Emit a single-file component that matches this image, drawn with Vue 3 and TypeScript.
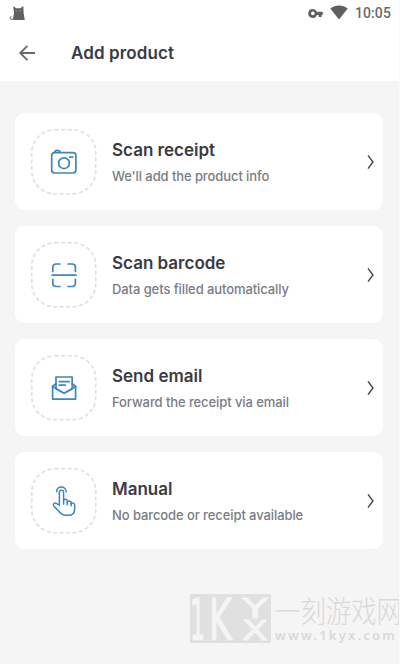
<script setup lang="ts">
type IconName = 'camera' | 'barcode' | 'mail' | 'tap'

interface Option {
  icon: IconName
  title: string
  description: string
}

const options: Option[] = [
  { icon: 'camera', title: 'Scan receipt', description: "We'll add the product info" },
  { icon: 'barcode', title: 'Scan barcode', description: 'Data gets filled automatically' },
  { icon: 'mail', title: 'Send email', description: 'Forward the receipt via email' },
  { icon: 'tap', title: 'Manual', description: 'No barcode or receipt available' },
]
</script>

<template>
  <div class="screen">
    <header class="top">
      <div class="status">
        <svg class="cat" width="18" height="16" viewBox="0 0 18 16">
          <path d="M3.6 15 5 8.5 4.2 1l3 2.3h4.2L14.4 1l.2 7 1.2 7Z" fill="#606060" />
          <path d="M5 14.3H2.6C.6 14.3.8 12 2.3 11.6" fill="none" stroke="#858585" stroke-width="1.2" />
          <path d="M6.5 5.8h1.6M10.5 5.8h1.6" stroke="#aaa" stroke-width=".8" />
        </svg>
        <div class="indicators">
          <svg class="key" width="16" height="9" viewBox="0 0 17 10">
            <path fill="#5f5f5f" fill-rule="evenodd" d="M5 0a5 5 0 0 1 4.6 3H16v3.7h-1.3V9h-3.3V6.7H9.6A5 5 0 1 1 5 0Zm0 2.9a2 2 0 1 0 0 4 2 2 0 0 0 0-4Z" />
          </svg>
          <svg class="wifi" width="18" height="15" viewBox="0 0 18 15">
            <path d="M.3 3.6C5.3-.6 12.7-.6 17.7 3.6L9 14.5Z" fill="#5f5f5f" />
          </svg>
          <span class="clock">10:05</span>
        </div>
      </div>
      <div class="bar">
        <svg class="back" width="18" height="18" viewBox="0 0 18 18">
          <path d="M17 9H2.4M9.4 1.8 2.2 9l7.2 7.2" fill="none" stroke="#6a6a6a" stroke-width="1.8" />
        </svg>
        <h1>Add product</h1>
      </div>
    </header>

    <main class="list">
      <button v-for="option in options" :key="option.title" class="card" type="button">
        <span class="tile">
          <svg class="ring" width="66" height="66" viewBox="0 0 66 66">
            <rect x="0.8" y="0.8" width="64" height="64" rx="23" />
          </svg>
          <svg class="glyph" :class="option.icon" width="28" height="32" viewBox="0 0 28 32">
            <template v-if="option.icon === 'camera'">
              <rect x="1.7" y="6.6" width="24.2" height="20.4" rx="3" />
              <path d="M4.6 6.4c.4-2.7 5-2.7 5.6 0" />
              <circle cx="14" cy="17.2" r="5.4" />
              <path d="M19.7 11.2h3" />
            </template>
            <template v-else-if="option.icon === 'barcode'">
              <path d="M2.8 12.5V8.2a3.2 3.2 0 0 1 3.2-3.2h4M18 5h4.2a3.2 3.2 0 0 1 3.2 3.2v4.3M25.4 20.3v4a3.2 3.2 0 0 1-3.2 3.2H18M10 27.5H6a3.2 3.2 0 0 1-3.2-3.2v-4" />
              <path d="M2.2 16.2H26" />
            </template>
            <template v-else-if="option.icon === 'mail'">
              <path d="M6 11.8 2.6 14.3v12.8h23V14.3l-3.4-2.5" />
              <path d="M6 16.9V5h16.2v11.9l-8.1 4.4ZM2.6 14.6l11.5 6.7 11.5-6.7" />
              <path d="M9.2 9.6h10M9.2 13.2h6" />
            </template>
            <template v-else>
              <path d="M9.4 20.1V7.4a2.1 2.1 0 0 1 4.2 0v7.8c.6-1.5 3.7-1.5 3.7.7v1.2c.7-1.6 3.8-1.4 3.8.7v1.1c1-1.4 3.6-1 3.6 1.1v3.9c0 4.3-2.5 6.4-6.3 6.4h-2.8c-3.4 0-5-1.8-6.6-3.8l-5.1-5.4c-1.7-2 1-4 2.8-2.5Z" />
              <path d="M6.6 6.7C6.4.6 16.2.5 16.2 6.7M13.6 15v4M17.3 16.8v3M21.1 18v2.8" />
            </template>
          </svg>
        </span>
        <span class="copy">
          <strong>{{ option.title }}</strong>
          <small>{{ option.description }}</small>
        </span>
        <svg class="chevron" width="8" height="16" viewBox="0 0 8 16">
          <path d="M1 1.4 6 8 1 14.6" fill="none" stroke="#444" stroke-width="1.4" />
        </svg>
      </button>
    </main>

    <footer class="brand">
      <svg class="logo" width="81" height="49" viewBox="0 0 81 49">
        <rect width="81" height="49" fill="#e0e0e0" />
        <g fill="#f5f5f5" stroke="#f5f5f5" stroke-width=".6" font-family="'DejaVu Sans', sans-serif">
          <text transform="translate(0 46) scale(.8 1.92)" font-size="30">1</text>
          <text transform="translate(19 46) scale(1.15 1.92)" font-size="30">K</text>
          <text transform="translate(52.5 23.5) scale(2.3 1.5)" font-size="18" textLength="11">Y</text>
          <text transform="translate(52 46) scale(2.1 1.5)" font-size="18" textLength="12.3">X</text>
        </g>
      </svg>
      <div class="wordmark">
        <span class="name">一刻游戏网</span>
        <span class="url">www.1kyx.com</span>
      </div>
    </footer>
  </div>
</template>

<style>
body {
  margin: 0;
  background: #fff;
}
</style>

<style scoped>
.screen {
  box-sizing: border-box;
  width: 400px;
  height: 664px;
  display: flex;
  flex-direction: column;
  overflow: hidden;
  background: #f5f5f5;
  border-right: 1px solid #fafafa;
  font-family: Inter, sans-serif;
}
.top {
  height: 81px;
  flex: none;
  background: #fff;
}
.status {
  height: 26px;
  display: flex;
  justify-content: space-between;
  align-items: center;
  padding: 0 8px 0 9px;
}
.indicators {
  display: flex;
  align-items: center;
}
.key {
  margin-right: 6px;
}
.wifi {
  margin: -1px 7px 0 0;
}
.clock {
  font: 500 14px/26px Roboto, sans-serif;
  letter-spacing: 0.1px;
  color: #6a6a6a;
}
.bar {
  height: 54px;
  display: flex;
  align-items: center;
  padding-left: 18px;
}
.back {
  margin-right: 35px;
}
h1 {
  margin: 0;
  font-size: 17px;
  line-height: 24px;
  font-weight: 600;
  letter-spacing: 0.12px;
  color: #3a3a44;
}
.list {
  display: flex;
  flex-direction: column;
  gap: 16px;
  padding: 32px 16px 0 15px;
}
.card {
  box-sizing: border-box;
  width: 100%;
  height: 97px;
  display: flex;
  align-items: center;
  padding: 0 8px 0 16px;
  border: 0;
  border-radius: 9px;
  background: #fff;
  font-family: inherit;
  text-align: left;
}
.tile {
  width: 66px;
  height: 66px;
  flex: none;
  display: grid;
  place-items: center;
  margin-right: 15px;
}
.tile > svg {
  grid-area: 1 / 1;
}
.ring {
  fill: none;
  stroke: #dedede;
  stroke-width: 1.5;
  stroke-dasharray: 4 2.5;
}
.glyph {
  fill: none;
  stroke: #3b86bd;
  stroke-width: 1.7;
  stroke-linecap: round;
  stroke-linejoin: round;
}
.tap {
  stroke-width: 1.5;
}
.copy {
  flex: 1;
  display: flex;
  flex-direction: column;
  gap: 4px;
}
strong {
  font-size: 17px;
  line-height: 24px;
  font-weight: 600;
  color: #3a3a42;
}
small {
  font-size: 13px;
  line-height: 20px;
  font-weight: 500;
  letter-spacing: -0.09px;
  color: #7a7c83;
}
.brand {
  display: flex;
  margin: 45px 0 0 190px;
  gap: 4px;
}
.logo {
  flex: none;
}
.wordmark {
  display: flex;
  flex-direction: column;
  flex: none;
  color: #d9d9d9;
  white-space: nowrap;
}
.name {
  font: 300 25.4px/31px "Noto Sans CJK SC", sans-serif;
  transform: scaleY(1.16);
}
.url {
  font: 600 13px/20px "Noto Sans", sans-serif;
  letter-spacing: 2.2px;
}
</style>
